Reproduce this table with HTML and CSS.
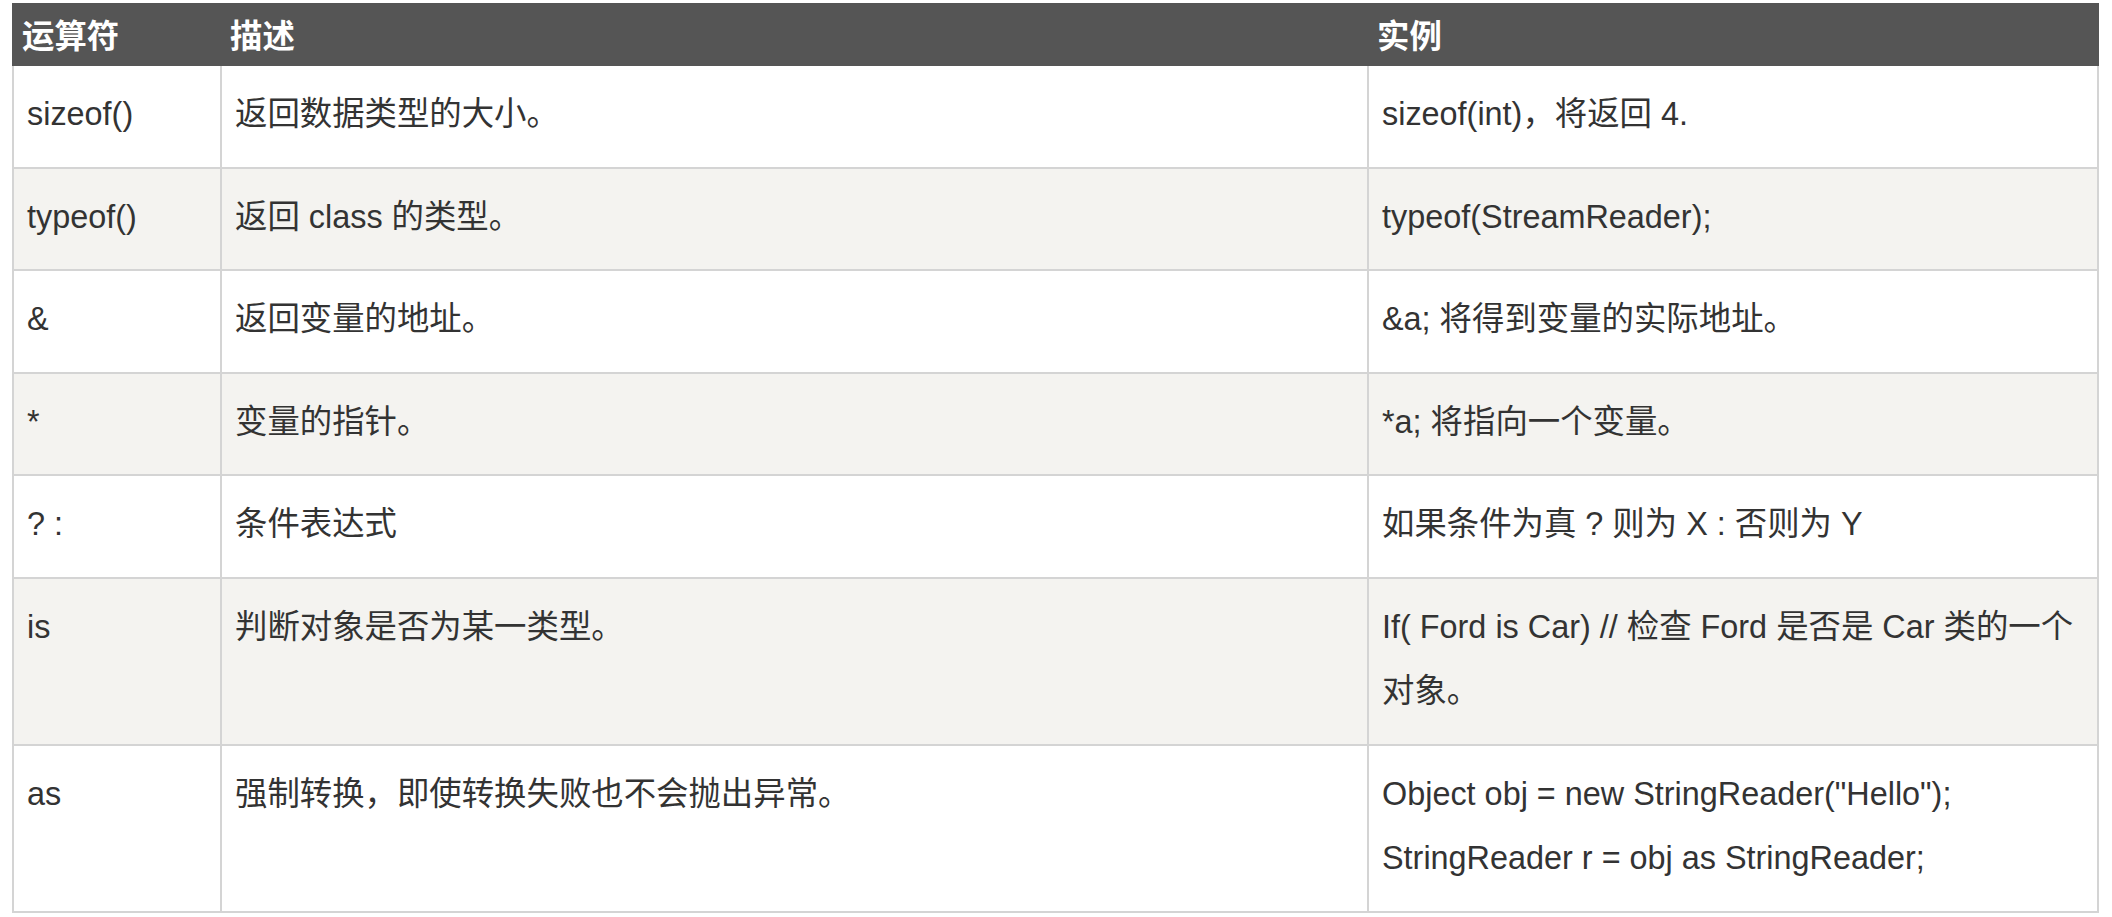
FILE: index.html
```html
<!DOCTYPE html>
<html lang="zh-CN">
<head>
<meta charset="utf-8">
<title>运算符</title>
<link rel="stylesheet" href="styles.css">
</head>
<body>
<div class="ref">
  <div class="row head">
    <div class="cell">运算符</div>
    <div class="cell">描述</div>
    <div class="cell">实例</div>
  </div>
  <div class="row">
    <div class="cell">sizeof()</div>
    <div class="cell">返回数据类型的大小。</div>
    <div class="cell">sizeof(int)，将返回 4.</div>
  </div>
  <div class="row alt">
    <div class="cell">typeof()</div>
    <div class="cell">返回 class 的类型。</div>
    <div class="cell">typeof(StreamReader);</div>
  </div>
  <div class="row">
    <div class="cell">&amp;</div>
    <div class="cell">返回变量的地址。</div>
    <div class="cell">&amp;a; 将得到变量的实际地址。</div>
  </div>
  <div class="row alt">
    <div class="cell">*</div>
    <div class="cell">变量的指针。</div>
    <div class="cell">*a; 将指向一个变量。</div>
  </div>
  <div class="row">
    <div class="cell">? :</div>
    <div class="cell">条件表达式</div>
    <div class="cell">如果条件为真 ? 则为 X : 否则为 Y</div>
  </div>
  <div class="row alt">
    <div class="cell">is</div>
    <div class="cell">判断对象是否为某一类型。</div>
    <div class="cell">If( Ford is Car) // 检查 Ford 是否是 Car 类的一个对象。</div>
  </div>
  <div class="row">
    <div class="cell">as</div>
    <div class="cell">强制转换，即使转换失败也不会抛出异常。</div>
    <div class="cell">Object obj = new StringReader("Hello");<br>StringReader r = obj as StringReader;</div>
  </div>
</div>
</body>
</html>
```

FILE: styles.css
```css
body {
  margin: 3px 13px 0 12px;
  font-family: "Liberation Sans", Arial, "Noto Sans CJK SC", sans-serif;
  font-size: 32.4px;
  color: #333;
  background: #fff;
}

.ref {
  display: flex;
  flex-direction: column;
}

.row {
  display: grid;
  grid-template-columns: 208px 1147px 732px;
  border-bottom: 2px solid #d4d4d4;
  background: #fff;
}

.row.alt {
  background: #f4f3f0;
}

.row.head {
  background: #555;
  color: #fff;
  font-weight: bold;
  border-bottom: none;
  height: 63px;
}

.cell {
  border-left: 2px solid #d4d4d4;
  padding: 16px 13px 20px 13px;
  line-height: 64.5px;
}

.cell:last-child {
  border-right: 2px solid #d4d4d4;
}

.head .cell {
  border-color: #555;
  padding: 5px 8px 0 8px;
  line-height: 58px;
}
```
